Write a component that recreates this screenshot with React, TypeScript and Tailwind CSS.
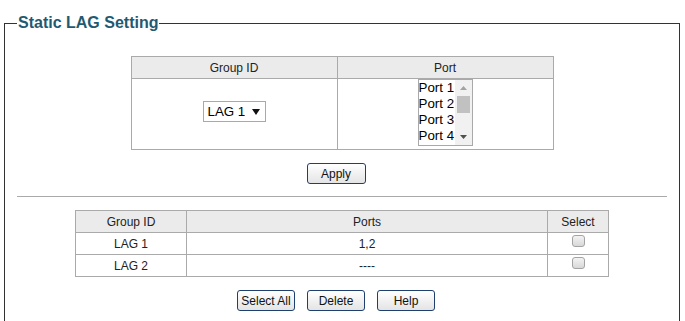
import React from "react";

const font = { fontFamily: '"Liberation Sans", Arial, sans-serif' };

function Btn({ label, w }: { label: string; w: string }) {
  return (
    <div
      className={`${w} h-[21px] flex items-center justify-center rounded-[3px] border border-[#1f3f6e] bg-gradient-to-b from-[#ffffff] to-[#e4e4e4] text-[12px] text-[#111]`}
    >
      {label}
    </div>
  );
}

function Check() {
  return (
    <div className="w-[13px] h-[12px] rounded-[3px] border border-[#a3a3a3] bg-gradient-to-b from-[#f3f3f3] to-[#d8d8d8]" />
  );
}

export default function App() {
  const ports = ["Port 1", "Port 2", "Port 3", "Port 4"];
  return (
    <div className="w-[685px] h-[321px] overflow-hidden bg-white" style={font}>
      <fieldset className="ml-[4px] mt-[14px] w-[676px] h-[340px] border border-[#333] px-[12px]">
        <legend className="px-[1px] text-[16px] leading-[18px] font-bold text-[#1f5a72]">
          Static LAG Setting
        </legend>

        <div className="mt-[24px] flex justify-center">
          <div className="grid grid-cols-[205px_215px] grid-rows-[21px_70px] gap-px bg-[#aaaaaa] p-px text-[12px] text-[#222]">
            <div className="bg-[#ebebeb] flex items-center justify-center">Group ID</div>
            <div className="bg-[#ebebeb] flex items-center justify-center">Port</div>
            <div className="bg-white flex justify-center items-start">
              <div className="mt-[22px] w-[63px] h-[21px] border border-[#a9a9a9] bg-white flex items-center pl-[4px] text-[13.33px] text-black">
                <span>LAG 1</span>
                <svg width="8" height="6" viewBox="0 0 8 6" className="ml-[7px]">
                  <path d="M0 0 L8 0 L4 6 Z" fill="#111" />
                </svg>
              </div>
            </div>
            <div className="bg-white flex justify-center items-start">
              <div className="w-[55px] h-[67px] border border-[#a9a9a9] bg-white flex">
                <div className="flex-1 min-w-0 flex flex-col text-[13.33px] leading-[16px] text-black">
                  {ports.map((p) => (
                    <div key={p} className="whitespace-nowrap">
                      {p}
                    </div>
                  ))}
                </div>
                <div className="w-[17px] shrink-0 bg-[#f1f1f1] flex flex-col">
                  <div className="h-[16px] flex items-center justify-center">
                    <svg width="7" height="4" viewBox="0 0 7 4">
                      <path d="M0 4 L7 4 L3.5 0 Z" fill="#a3a3a3" />
                    </svg>
                  </div>
                  <div className="mx-[2px] h-[17px] bg-[#c1c1c1]" />
                  <div className="flex-1" />
                  <div className="h-[16px] flex items-center justify-center">
                    <svg width="7" height="4" viewBox="0 0 7 4">
                      <path d="M0 0 L7 0 L3.5 4 Z" fill="#505050" />
                    </svg>
                  </div>
                </div>
              </div>
            </div>
          </div>
        </div>

        <div className="mt-[13px] flex justify-center pr-[12px]">
          <Btn label="Apply" w="w-[59px]" />
        </div>

        <div className="mt-[12px] h-px bg-[#aaaaaa]" />

        <div className="mt-[13px] flex justify-center">
          <div className="grid grid-cols-[110px_360px_60px] grid-rows-[21px_21px_21px] gap-px bg-[#aaaaaa] p-px text-[12px] text-[#222]">
            <div className="bg-[#ebebeb] flex items-center justify-center">Group ID</div>
            <div className="bg-[#ebebeb] flex items-center justify-center">Ports</div>
            <div className="bg-[#ebebeb] flex items-center justify-center">Select</div>
            <div className="bg-white flex items-center justify-center">LAG 1</div>
            <div className="bg-white flex items-center justify-center">1,2</div>
            <div className="bg-white flex items-start justify-center pt-[2px]">
              <Check />
            </div>
            <div className="bg-white flex items-center justify-center">LAG 2</div>
            <div className="bg-white flex items-center justify-center">----</div>
            <div className="bg-white flex items-start justify-center pt-[2px]">
              <Check />
            </div>
          </div>
        </div>

        <div className="mt-[13px] flex justify-center gap-[12px] pr-[12px]">
          <Btn label="Select All" w="w-[58px]" />
          <Btn label="Delete" w="w-[58px]" />
          <Btn label="Help" w="w-[58px]" />
        </div>
      </fieldset>
    </div>
  );
}
